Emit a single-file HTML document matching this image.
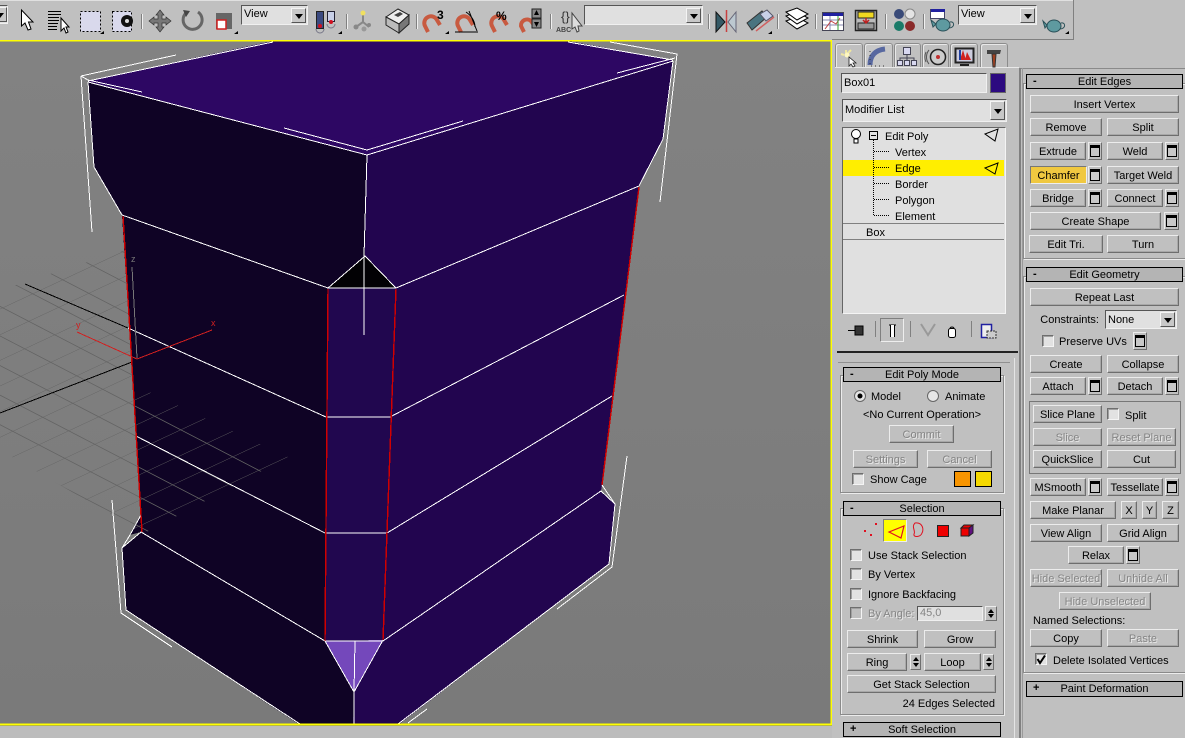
<!DOCTYPE html>
<html><head><meta charset="utf-8"><style>
html,body{margin:0;padding:0;background:#c0c0c0;overflow:hidden}
#p{position:relative;width:1185px;height:738px;overflow:hidden;background:#c0c0c0;font:11px/16px "Liberation Sans",sans-serif;color:#000}
#p div,#p svg{position:absolute;box-sizing:border-box}
.b{display:flex;align-items:center;justify-content:center;white-space:nowrap;background:#c0c0c0;border:1px solid;border-color:#ececec #6e6e6e #6e6e6e #ececec;box-shadow:inset -1px -1px 0 #a8a8a8;padding-top:1px}
.d{color:#858585;text-shadow:1px 1px 0 #e8e8e8}
.w{border:1px solid;border-color:#ececec #6e6e6e #6e6e6e #ececec;background:#c0c0c0}
.w:after{content:"";position:absolute;left:1px;right:1px;top:2px;bottom:2px;border:1px solid #000;border-top-width:3px;background:#c8c8c8}
.c{width:12px;height:12px;background:#e2e2e2;border:1px solid;border-color:#6e6e6e #f4f4f4 #f4f4f4 #6e6e6e;box-shadow:inset 1px 1px 0 #a0a0a0}
.h{background:#b4b4b4;border:1px solid #000;text-align:center;line-height:15px;height:15px}
.h span{position:absolute;left:6px;top:-1px;font-weight:bold}
.t{white-space:nowrap;height:14px}
.g{border:1px solid #8a8a8a;box-shadow:inset 1px 1px 0 #ececec,1px 1px 0 #ececec}
.i{background:#e0e0e0;border:1px solid;border-color:#555 #f0f0f0 #f0f0f0 #555;padding-left:2px;white-space:nowrap;line-height:17px}
.a{background:#c8c8c8;border:1px solid;border-color:#f4f4f4 #555 #555 #f4f4f4}
.a:after{content:"";position:absolute;left:50%;top:50%;margin:-2px 0 0 -4px;border:4px solid transparent;border-top:5px solid #000;border-bottom:0}
.s{background:#c0c0c0;border:1px solid;border-color:#ececec #6e6e6e #6e6e6e #ececec}
.s:before{content:"";position:absolute;left:50%;top:2px;margin-left:-3px;border:3px solid transparent;border-bottom:4px solid #000;border-top:0}
.s:after{content:"";position:absolute;left:50%;bottom:2px;margin-left:-3px;border:3px solid transparent;border-top:4px solid #000;border-bottom:0}
.tab{border:1px solid #8c8c8c;border-bottom:0;border-radius:3px 3px 0 0;box-shadow:inset 1px 1px 0 #e8e8e8;top:43px;height:25px}
</style></head><body><div id="p">

<!-- viewport -->
<svg style="left:0;top:40px" width="832" height="686" viewBox="0 40 832 686" shape-rendering="crispEdges">
<defs>
<pattern id="gr" patternUnits="userSpaceOnUse" width="100" height="100" patternTransform="matrix(.26 .135 -.3 .14 155 416)"><path d="M0 0H100M0 0V100" stroke="#636363" stroke-width="5" fill="none"/></pattern>
<linearGradient id="bg" x1="0" y1="0" x2="0" y2="1"><stop offset="0" stop-color="#828282"/><stop offset="1" stop-color="#7a7a7a"/></linearGradient>
</defs>
<rect x="0" y="40" width="832" height="686" fill="url(#bg)"/>
<polygon points="87,81 273,41 568,41 673,60 367,155" fill="#2d0763"/>
<polygon points="88,82 367,155 365,256 328,288 325,641 354,692 353,725 300,725 126,610 122,548 141,532 130,535 141,515 122,215 94,167" fill="#0f0325"/>
<polygon points="367,155 673,60 663,139 639,186 602,485 601,491 615,504 609,564 398,725 353,725 354,692 383,640 396,288 365,256" fill="#22054f"/>
<polygon points="328,288 396,288 383,640 325,641" fill="#21074f"/>
<polygon points="365,256 328,288 396,288" fill="#020104"/>
<polygon points="325,641 383,640 354,692" fill="#7448bb"/>
<polygon points="0,290 125,250 134,385 288,457 141,535 120,520 0,450" fill="url(#gr)" shape-rendering="auto"/>
<g fill="none" stroke="#000" stroke-width="1"><path d="M25 284L128 328M0 413L132 362"/></g>
<g fill="none" stroke="#fff" stroke-width="1">
<path d="M88 81L273 42M568 42L673 60M88 82L367 155L673 61"/>
<path d="M88 82L94 167L122 215M673 61L663 139L639 186"/>
<path d="M122 215L328 288H396L639 186"/>
<path d="M128 328L326 417H390L624 295"/>
<path d="M136 436L325 533H387L612 396"/>
<path d="M141 532L325 641H383L601 491"/>
<path d="M141 515L130 535L122 548L141 532M122 548L126 610L300 724"/>
<path d="M602 485L615 504L609 564L398 724M601 491L615 504"/>
<path d="M325 641L354 692L383 640M355 641L354 692V725M367 155L364 256V335M365 256L328 288M365 256L396 288"/>
<!-- bracket gizmo -->
<path d="M81 76L176 55M81 76L88 80L142 92M81 76L92 232"/>
<path d="M284 128L367 150L463 121M617 73L675 58"/>
<path d="M610 42L677 54L660 202"/>
<path d="M627 456L612 567L557 609M427 709L408 723"/>
<path d="M112 500L121 613L172 647"/>
</g>
<g fill="none" stroke="#d00000" stroke-width="1.400">
<path d="M123 216L142 532M328 289L325 641M396 289L383 640M639 187L602 485"/>
</g>
<path d="M132 267L137 358" stroke="#777" fill="none"/>
<path d="M212 330L137 359L77 332" stroke="#d02020" fill="none"/>
<text x="211" y="326" font-size="9" fill="#d02020" font-family="Liberation Sans">x</text>
<text x="76" y="328" font-size="9" fill="#d02020" font-family="Liberation Sans">y</text>
<text x="131" y="262" font-size="9" fill="#777" font-family="Liberation Sans">z</text>
<path d="M0 40.500H831.500V724.500H0" fill="none" stroke="#ffff00" stroke-width="2"/>
</svg>
<div style="left:0;top:726px;width:832px;height:12px;background:#bcbcbc"></div>

<!-- toolbar -->
<div style="left:0;top:0;width:1074px;height:40px;background:#c0c0c0;border-top:1px solid #e0e0e0"></div>
<div style="left:832px;top:39px;width:242px;height:1px;background:#808080"></div>
<div style="left:1073px;top:0;width:1px;height:40px;background:#808080"></div>

<div class="i" style="left:-60px;top:5px;width:68px;height:19px"></div>
<div class="a" style="left:-8px;top:7px;width:15px;height:15px"></div>
<div class="i" style="left:241px;top:5px;width:67px;height:20px">View</div>
<div class="a" style="left:291px;top:8px;width:15px;height:15px"></div>
<div class="i" style="left:584px;top:5px;width:119px;height:20px"></div>
<div class="a" style="left:686px;top:8px;width:15px;height:15px"></div>
<div class="i" style="left:958px;top:5px;width:79px;height:20px">View</div>
<div class="a" style="left:1020px;top:8px;width:15px;height:15px"></div>

<!-- tabs -->
<div class="tab" style="left:835px;width:28px"></div>
<div class="tab" style="left:864px;width:29px;background:#c8c8c8"></div>
<div class="tab" style="left:894px;width:27px"></div>
<div class="tab" style="left:922px;width:27px"></div>
<div class="tab" style="left:950px;width:28px"></div>
<div class="tab" style="left:980px;width:28px"></div>
<div style="left:835px;top:67px;width:184px;height:1px;background:#e8e8e8"></div>
<div style="left:1019px;top:68px;width:166px;height:1px;background:#8a8a8a"></div>
<div style="left:1019px;top:68px;width:2px;height:670px;background:#808080"></div>
<div style="left:1022px;top:68px;width:1px;height:670px;background:#9a9a9a"></div>

<!-- left panel -->
<div class="i" style="left:841px;top:73px;width:146px;height:20px;line-height:18px">Box01</div>
<div style="left:990px;top:73px;width:16px;height:20px;background:#2c0a80;border:1px solid #666"></div>
<div class="i" style="left:842px;top:99px;width:165px;height:23px;line-height:21px">Modifier List</div>
<div class="a" style="left:990px;top:101px;width:15px;height:19px"></div>
<div style="left:842px;top:127px;width:164px;height:187px;background:#e0e0e0;border:1px solid;border-color:#666 #f4f4f4 #f4f4f4 #666"></div>
<div style="left:843px;top:160px;width:161px;height:16px;background:#ffee00"></div>
<div class="t" style="left:885px;top:129px">Edit Poly</div>
<div class="t" style="left:895px;top:145px">Vertex</div>
<div class="t" style="left:895px;top:161px">Edge</div>
<div class="t" style="left:895px;top:177px">Border</div>
<div class="t" style="left:895px;top:193px">Polygon</div>
<div class="t" style="left:895px;top:209px">Element</div>
<div class="t" style="left:866px;top:225px">Box</div>
<div style="left:843px;top:223px;width:161px;height:1px;background:#808080"></div>
<div style="left:843px;top:239px;width:161px;height:1px;background:#808080"></div>
<div style="left:880px;top:318px;width:24px;height:24px;border:1px solid;border-color:#808080 #eee #eee #808080"></div>
<div style="left:875px;top:321px;width:1px;height:16px;background:#808080"></div>
<div style="left:910px;top:321px;width:1px;height:16px;background:#808080"></div>
<div style="left:971px;top:321px;width:1px;height:16px;background:#808080"></div>
<div style="left:837px;top:351px;width:181px;height:2px;background:#222"></div>
<div style="left:838px;top:362px;width:172px;height:1px;background:#909090"></div>
<div style="left:1014px;top:358px;width:1px;height:380px;background:#e4e4e4"></div>

<div class="g" style="left:840px;top:375px;width:164px;height:118px"></div>
<div class="h" style="left:843px;top:367px;width:158px"><span>-</span>Edit Poly Mode</div>
<div class="t" style="left:871px;top:389px">Model</div>
<div class="t" style="left:945px;top:389px">Animate</div>
<div class="t" style="left:847px;width:150px;text-align:center;top:407px">&lt;No Current Operation&gt;</div>
<div class="b d" style="left:889px;top:425px;width:65px;height:18px">Commit</div>
<div class="b d" style="left:853px;top:450px;width:65px;height:18px">Settings</div>
<div class="b d" style="left:927px;top:450px;width:65px;height:18px">Cancel</div>
<div class="c" style="left:852px;top:473px"></div>
<div class="t" style="left:870px;top:472px">Show Cage</div>
<div style="left:954px;top:471px;width:17px;height:16px;background:#f79400;border:1px solid #000"></div>
<div style="left:975px;top:471px;width:17px;height:16px;background:#f5d800;border:1px solid #000"></div>

<div class="g" style="left:840px;top:508px;width:164px;height:207px"></div>
<div class="h" style="left:843px;top:501px;width:158px"><span>-</span>Selection</div>
<div style="left:883px;top:519px;width:24px;height:23px;background:#ffff00;border:1px solid;border-color:#808080 #eee #eee #808080"></div>
<div class="c" style="left:850px;top:549px"></div><div class="t" style="left:868px;top:548px">Use Stack Selection</div>
<div class="c" style="left:850px;top:568px"></div><div class="t" style="left:868px;top:567px">By Vertex</div>
<div class="c" style="left:850px;top:588px"></div><div class="t" style="left:868px;top:587px">Ignore Backfacing</div>
<div class="c" style="left:850px;top:607px;background:#c0c0c0"></div><div class="t d" style="left:868px;top:606px">By Angle:</div>
<div class="i d" style="left:917px;top:606px;width:66px;height:15px;line-height:13px;text-shadow:none">45,0</div>
<div class="s" style="left:985px;top:606px;width:12px;height:15px"></div>
<div class="b" style="left:847px;top:630px;width:71px;height:18px">Shrink</div>
<div class="b" style="left:924px;top:630px;width:72px;height:18px">Grow</div>
<div class="b" style="left:847px;top:653px;width:60px;height:18px">Ring</div>
<div class="s" style="left:910px;top:654px;width:11px;height:16px"></div>
<div class="b" style="left:924px;top:653px;width:57px;height:18px">Loop</div>
<div class="s" style="left:983px;top:654px;width:11px;height:16px"></div>
<div class="b" style="left:847px;top:675px;width:149px;height:18px">Get Stack Selection</div>
<div class="t" style="right:190px;top:696px">24 Edges Selected</div>
<div class="h" style="left:843px;top:722px;width:158px"><span style="left:6px">+</span>Soft Selection</div>

<!-- right panel -->
<div class="g" style="left:1023px;top:83px;width:170px;height:176px"></div>
<div class="h" style="left:1026px;top:74px;width:157px"><span>-</span>Edit Edges</div>
<div class="b" style="left:1030px;top:95px;width:149px;height:18px">Insert Vertex</div>
<div class="b" style="left:1030px;top:118px;width:72px;height:18px">Remove</div>
<div class="b" style="left:1107px;top:118px;width:72px;height:18px">Split</div>
<div class="b" style="left:1030px;top:142px;width:56px;height:18px">Extrude</div><div class="w" style="left:1088px;top:142px;width:14px;height:18px"></div>
<div class="b" style="left:1107px;top:142px;width:56px;height:18px">Weld</div><div class="w" style="left:1165px;top:142px;width:14px;height:18px"></div>
<div class="b" style="left:1030px;top:166px;width:57px;height:18px;background:#f0c840;border-color:#777 #eee #eee #777;box-shadow:none">Chamfer</div><div class="w" style="left:1088px;top:166px;width:14px;height:18px"></div>
<div class="b" style="left:1107px;top:166px;width:72px;height:18px">Target Weld</div>
<div class="b" style="left:1030px;top:189px;width:56px;height:18px">Bridge</div><div class="w" style="left:1088px;top:189px;width:14px;height:18px"></div>
<div class="b" style="left:1107px;top:189px;width:56px;height:18px">Connect</div><div class="w" style="left:1165px;top:189px;width:14px;height:18px"></div>
<div class="b" style="left:1030px;top:212px;width:131px;height:18px">Create Shape</div><div class="w" style="left:1164px;top:212px;width:15px;height:18px"></div>
<div class="b" style="left:1029px;top:235px;width:74px;height:18px">Edit Tri.</div>
<div class="b" style="left:1107px;top:235px;width:72px;height:18px">Turn</div>

<div class="g" style="left:1023px;top:276px;width:170px;height:397px"></div>
<div class="h" style="left:1026px;top:267px;width:157px"><span>-</span>Edit Geometry</div>
<div class="b" style="left:1030px;top:288px;width:149px;height:18px">Repeat Last</div>
<div class="t" style="right:86px;top:312px">Constraints:</div>
<div class="i" style="left:1105px;top:310px;width:72px;height:19px;line-height:18px">None</div>
<div class="a" style="left:1160px;top:312px;width:15px;height:15px"></div>
<div class="c" style="left:1042px;top:335px"></div><div class="t" style="left:1059px;top:334px">Preserve UVs</div>
<div class="w" style="left:1133px;top:332px;width:14px;height:18px"></div>
<div class="b" style="left:1030px;top:355px;width:72px;height:18px">Create</div>
<div class="b" style="left:1107px;top:355px;width:72px;height:18px">Collapse</div>
<div class="b" style="left:1030px;top:377px;width:56px;height:18px">Attach</div><div class="w" style="left:1088px;top:377px;width:14px;height:18px"></div>
<div class="b" style="left:1107px;top:377px;width:56px;height:18px">Detach</div><div class="w" style="left:1165px;top:377px;width:14px;height:18px"></div>
<div style="left:1029px;top:401px;width:152px;height:73px;border:1px solid #777"></div>
<div class="b" style="left:1033px;top:405px;width:69px;height:18px">Slice Plane</div>
<div class="c" style="left:1107px;top:408px"></div><div class="t" style="left:1125px;top:408px">Split</div>
<div class="b d" style="left:1033px;top:428px;width:69px;height:18px">Slice</div>
<div class="b d" style="left:1107px;top:428px;width:69px;height:18px">Reset Plane</div>
<div class="b" style="left:1033px;top:450px;width:69px;height:18px">QuickSlice</div>
<div class="b" style="left:1107px;top:450px;width:69px;height:18px">Cut</div>
<div class="b" style="left:1030px;top:478px;width:56px;height:18px">MSmooth</div><div class="w" style="left:1088px;top:478px;width:14px;height:18px"></div>
<div class="b" style="left:1107px;top:478px;width:56px;height:18px">Tessellate</div><div class="w" style="left:1165px;top:478px;width:14px;height:18px"></div>
<div class="b" style="left:1030px;top:501px;width:86px;height:18px">Make Planar</div>
<div class="b" style="left:1121px;top:501px;width:16px;height:18px">X</div>
<div class="b" style="left:1142px;top:501px;width:15px;height:18px">Y</div>
<div class="b" style="left:1162px;top:501px;width:17px;height:18px">Z</div>
<div class="b" style="left:1030px;top:524px;width:72px;height:18px">View Align</div>
<div class="b" style="left:1107px;top:524px;width:72px;height:18px">Grid Align</div>
<div class="b" style="left:1068px;top:546px;width:56px;height:18px">Relax</div><div class="w" style="left:1126px;top:546px;width:14px;height:18px"></div>
<div class="b d" style="left:1030px;top:569px;width:72px;height:18px">Hide Selected</div>
<div class="b d" style="left:1107px;top:569px;width:72px;height:18px">Unhide All</div>
<div class="b d" style="left:1059px;top:592px;width:92px;height:18px">Hide Unselected</div>
<div class="t" style="left:1033px;top:613px">Named Selections:</div>
<div class="b" style="left:1030px;top:629px;width:72px;height:18px">Copy</div>
<div class="b d" style="left:1107px;top:629px;width:72px;height:18px">Paste</div>
<div class="c" style="left:1035px;top:653px"></div><div class="t" style="left:1053px;top:653px">Delete Isolated Vertices</div>
<div class="h" style="left:1026px;top:681px;width:157px;height:16px"><span>+</span>Paint Deformation</div>

<!-- icon overlay -->
<svg style="left:0;top:0" width="1185" height="738" viewBox="0 0 1185 738" font-family="Liberation Sans">
<!-- separators -->
<g stroke="#808080"><path d="M141.500 14V29M346.500 14V29M416.500 14V29M550.500 14V29M708.500 14V29M777.500 14V29M815.500 14V29M885.500 14V29M923.500 14V29"/></g>
<g stroke="#f0f0f0"><path d="M142.500 14V29M347.500 14V29M417.500 14V29M551.500 14V29M709.500 14V29M778.500 14V29M816.500 14V29M886.500 14V29M924.500 14V29"/></g>
<!-- corner marks -->
<g fill="#000"><path d="M104 34h-4l4-3zM238 34h-4l4-3zM342 34h-4l4-3zM449 34h-4l4-3zM772 34h-4l4-3zM1069 34h-4l4-3z"/></g>
<!-- select -->
<path d="M21.500 10V26L25 23L28 30L31 29L28.500 22H33Z" fill="#fff" stroke="#000"/>
<g stroke="#000"><path d="M48 11.500H61M48 14.500H61M48 17.500H59M48 20.500H59M48 23.500H58M48 26.500H57M48 29.500H57"/></g>
<path d="M61 18V31L64 28L66 33L68 32L66 27H69Z" fill="#fff" stroke="#000"/>
<rect x="80.500" y="11.500" width="20" height="20" fill="#d9d9ec" stroke="#000" stroke-dasharray="2 2"/>
<rect x="112.500" y="11.500" width="19" height="20" fill="#d9d9ec" stroke="#000" stroke-dasharray="2 2"/>
<circle cx="127" cy="21" r="6" fill="#111"/><circle cx="127" cy="21" r="2" fill="#ddd"/>
<path d="M160 10L164 15H162V19H166V17L171 21L166 25V23H162V27H164L160 32L156 27H158V23H154V25L149 21L154 17V19H158V15H156Z" fill="#777" stroke="#333" stroke-width=".7"/>
<path d="M186 13A9.500 9.500 0 1 0 198 12" fill="none" stroke="#666" stroke-width="3"/><path d="M183 10L190 11L186 17Z" fill="#444"/>
<rect x="216" y="13" width="16" height="16" fill="#666"/><rect x="217" y="20" width="9" height="9" fill="#fff" stroke="#d02020" stroke-width="1.500"/>
<!-- pair -->
<rect x="316.500" y="11.500" width="7" height="17" fill="#3a4a80" stroke="#222"/><rect x="327.500" y="11.500" width="7" height="10" fill="#c8d0e8" stroke="#223"/>
<circle cx="320" cy="26" r="2" fill="#d01020"/><circle cx="331" cy="22" r="2" fill="#d01020"/><path d="M316 29A4 4 0 0 0 324 29M327 24A4 4 0 0 0 335 24" fill="none" stroke="#778"/>
<!-- hierarchy -->
<path d="M363 15V22M363 22L356 27M363 22L369 27" stroke="#888" stroke-width="2"/><circle cx="363" cy="13" r="2.500" fill="#f0e060"/><circle cx="356" cy="27" r="2.500" fill="#888"/><circle cx="364" cy="29" r="2.500" fill="#999"/><circle cx="369" cy="25" r="2" fill="#888"/>
<!-- box -->
<path d="M386 17L398 9L409 15L399 24Z" fill="#eee" stroke="#222"/><path d="M386 17V25L399 33V24Z" fill="#bbb" stroke="#222"/><path d="M399 24V33L409 24V15Z" fill="#777" stroke="#222"/><path d="M394 15L400 12L403 14L398 17Z" fill="#444"/>
<!-- magnets -->
<g fill="none" stroke="#c85a40" stroke-width="4"><path d="M428 32L425 26A6 6 0 0 1 437 20L440 25"/><path d="M461 32L458 26A6 6 0 0 1 470 20L473 25"/><path d="M495 32L492 26A6 6 0 0 1 504 20L507 25"/><path d="M524 32L521 26A6 6 0 0 1 531 21L534 25"/></g>
<text x="437" y="19" font-size="12" font-weight="bold">3</text>
<path d="M455 32H478M469 11L477 31M466 12C472 16 475 22 475 27" fill="none" stroke="#000"/>
<text x="496" y="20" font-size="12" font-weight="bold">%</text>
<rect x="532" y="9" width="9" height="9" fill="#888" stroke="#222"/><rect x="532" y="19" width="9" height="9" fill="#888" stroke="#222"/><path d="M536.500 10L534 15H539ZM536.500 27L534 22H539Z" fill="#000"/>
<text x="561" y="21" font-size="13" fill="#333">{}</text><text x="556" y="32" font-size="7" font-weight="bold" fill="#444">ABC</text><path d="M572 13V29L575 27L577 32L579 31L578 26H582Z" fill="#ddd" stroke="#444"/>
<!-- mirror -->
<path d="M716 12V32L725 22Z" fill="#355a66" stroke="#111"/><path d="M736 12V32L728 22Z" fill="#bcc8d0" stroke="#667"/><path d="M726.500 10V32" stroke="#c84040" stroke-width="1.500"/>
<!-- align -->
<path d="M747 23L762 11L767 17L752 30Z" fill="#4a7480" stroke="#333"/><path d="M760 14L767 10L773 16L766 21Z" fill="#c8d0e8" stroke="#556"/><path d="M756 31L774 17" stroke="#d06060" stroke-width="1.500"/>
<!-- layers -->
<g fill="#fff" stroke="#000"><path d="M786 21L797 17L808 23L797 29Z"/><path d="M786 16L797 12L808 18L797 24Z"/><path d="M786 11L797 7L808 13L797 19Z" transform="translate(0 1)"/></g>
<!-- curve editor -->
<rect x="822.500" y="12.500" width="21" height="18" fill="#fff" stroke="#445"/><rect x="823" y="13" width="20" height="3" fill="#2020a0"/><path d="M823 20H843M823 25H843M830 16V30M838 16V30" stroke="#8888b0"/><path d="M825 29L831 21L836 24L840 18" fill="none" stroke="#c04040"/><path d="M838 16V30" stroke="#30a030"/>
<!-- schematic -->
<rect x="855.500" y="10.500" width="21" height="20" fill="#bbb" stroke="#222" stroke-width="1.500"/><rect x="858" y="12" width="16" height="6" fill="#f0d820" stroke="#222"/><rect x="858" y="23" width="16" height="6" fill="#999" stroke="#222"/><path d="M866 18V22M863 20L866 23L869 20" stroke="#c02020" fill="none" stroke-width="1.500"/>
<!-- materials -->
<circle cx="899" cy="14" r="5" fill="#394a78"/><circle cx="910" cy="14" r="5" fill="#e4e4e4" stroke="#888"/><circle cx="899" cy="26" r="5" fill="#1a7a68"/><circle cx="910" cy="26" r="5" fill="#8a2a2a"/>
<!-- render teapot -->
<rect x="930.500" y="9.500" width="14" height="9" fill="#fff" stroke="#446"/><rect x="931" y="9" width="14" height="3" fill="#2020a0"/>
<g fill="#5e9aa0" stroke="#2a5058"><ellipse cx="943" cy="25" rx="7" ry="6"/><path d="M936 24L931 20L933 27Z"/><path d="M950 22C955 21 955 28 949 28" fill="none"/></g>
<g fill="#5e9aa0" stroke="#2a5058"><ellipse cx="1054" cy="26" rx="7" ry="6"/><path d="M1047 25L1043 21L1045 28Z"/><path d="M1061 23C1066 22 1066 29 1060 29" fill="none"/></g>
<!-- tabs icons -->
<path d="M846 53V50M848 53L851 50M844 55L841 54" stroke="#f0e8a0" stroke-width="2"/><circle cx="847" cy="55" r="2.500" fill="#fff8c0"/><path d="M849 57V66L851 64L853 67L855 66L853 63H856Z" fill="#fff" stroke="#222" stroke-width=".8"/>
<path d="M870 65C870 55 876 50 885 49" fill="none" stroke="#5868a0" stroke-width="5"/><path d="M870 51V66H886" fill="none" stroke="#333" stroke-dasharray="1 3"/>
<g fill="#d8d8f0" stroke="#445"><rect x="903.500" y="47.500" width="7" height="7"/><rect x="897.500" y="60.500" width="5" height="5"/><rect x="904.500" y="60.500" width="5" height="5"/><rect x="911.500" y="60.500" width="5" height="5"/><path d="M907 55V60M900 60V58H914V60" fill="none"/></g>
<circle cx="938" cy="57" r="7.500" fill="#ccc" stroke="#222" stroke-width="1.500"/><circle cx="938" cy="57" r="2" fill="#c03030"/><path d="M929 50A11 11 0 0 0 929 64M926 52A12 12 0 0 0 926 62" fill="none" stroke="#555"/>
<rect x="955.500" y="48.500" width="18" height="14" fill="#ccd" stroke="#222" stroke-width="2"/><path d="M963 50L960 60H966ZM967 52L965 60H971Z" fill="#d02020"/><path d="M960 50V60" stroke="#2040a0" stroke-width="2"/><path d="M960 65H969" stroke="#222" stroke-width="2"/>
<path d="M987 50H1001L1000 54H987Z" fill="#444"/><path d="M992 54H996L995 67H993Z" fill="#a04020" stroke="#333"/>
<!-- name list icons -->
<path d="M985 135L998 130L995 142Z" transform="translate(0 -1)" fill="none" stroke="#000"/>
<path d="M985 168L998 163L995 174Z" fill="none" stroke="#000"/>
<circle cx="856" cy="134" r="4.500" fill="#fff" stroke="#000"/><path d="M854 139H858V143H854Z" fill="#fff" stroke="#000"/>
<rect x="869.500" y="131.500" width="8" height="8" fill="#e0e0e0" stroke="#000"/><path d="M871 135.500H876" stroke="#000"/>
<path d="M873.500 140V215.500M874 151.500H890M874 167.500H890M874 183.500H890M874 199.500H890M874 215.500H890" stroke="#000" stroke-dasharray="1 1" fill="none"/>
<!-- stack icons -->
<path d="M848 330.500H855M855 326V335H863V326Z" fill="#333" stroke="#000"/><path d="M889 325H896M890.500 325V337M894.500 325V337" stroke="#000" stroke-width="1"/><rect x="891" y="325" width="3" height="12" fill="#fff"/>
<path d="M921 324L928 335L935 324" fill="none" stroke="#999" stroke-width="2"/><rect x="948.500" y="328.500" width="7" height="9" rx="2" fill="#fff" stroke="#000"/><path d="M950 328A2.500 2.500 0 0 1 954 328" fill="none" stroke="#000"/>
<rect x="981.500" y="324.500" width="10" height="13" fill="#eee" stroke="#2020a0" stroke-width="1.500"/><rect x="987" y="331" width="9" height="7" fill="#ccc" stroke="#333" stroke-dasharray="2 1"/>
<!-- radios -->
<circle cx="860" cy="396" r="5.500" fill="#e6e6e6" stroke="#666"/><circle cx="860" cy="396" r="2.500" fill="#000"/>
<circle cx="933" cy="396" r="5.500" fill="#e6e6e6" stroke="#666"/>
<!-- selection icons -->
<g fill="#e01020"><rect x="864" y="530" width="2" height="2"/><rect x="875" y="523" width="2" height="2"/><rect x="870" y="534" width="2" height="2"/></g>
<path d="M889 532L904 526L901 538Z" fill="none" stroke="#e01020" stroke-width="1.200"/>
<path d="M915 523C923 522 924 530 922 533C921 537 913 538 914 534C916 531 911 527 915 523Z" fill="none" stroke="#e01020"/>
<rect x="937.500" y="525.500" width="11" height="11" fill="#ee0000" stroke="#222"/>
<path d="M961 528V536H969V528Z" fill="#ee0000" stroke="#222"/><path d="M961 528L964 525H973L969 528Z" fill="#ee0000" stroke="#222"/><path d="M969 528L973 525V533L969 536Z" fill="#601080" stroke="#222"/>
<!-- check -->
<path d="M1037.500 659L1040 663L1045 655.500" fill="none" stroke="#000" stroke-width="2"/>
</svg>
</div></body></html>
